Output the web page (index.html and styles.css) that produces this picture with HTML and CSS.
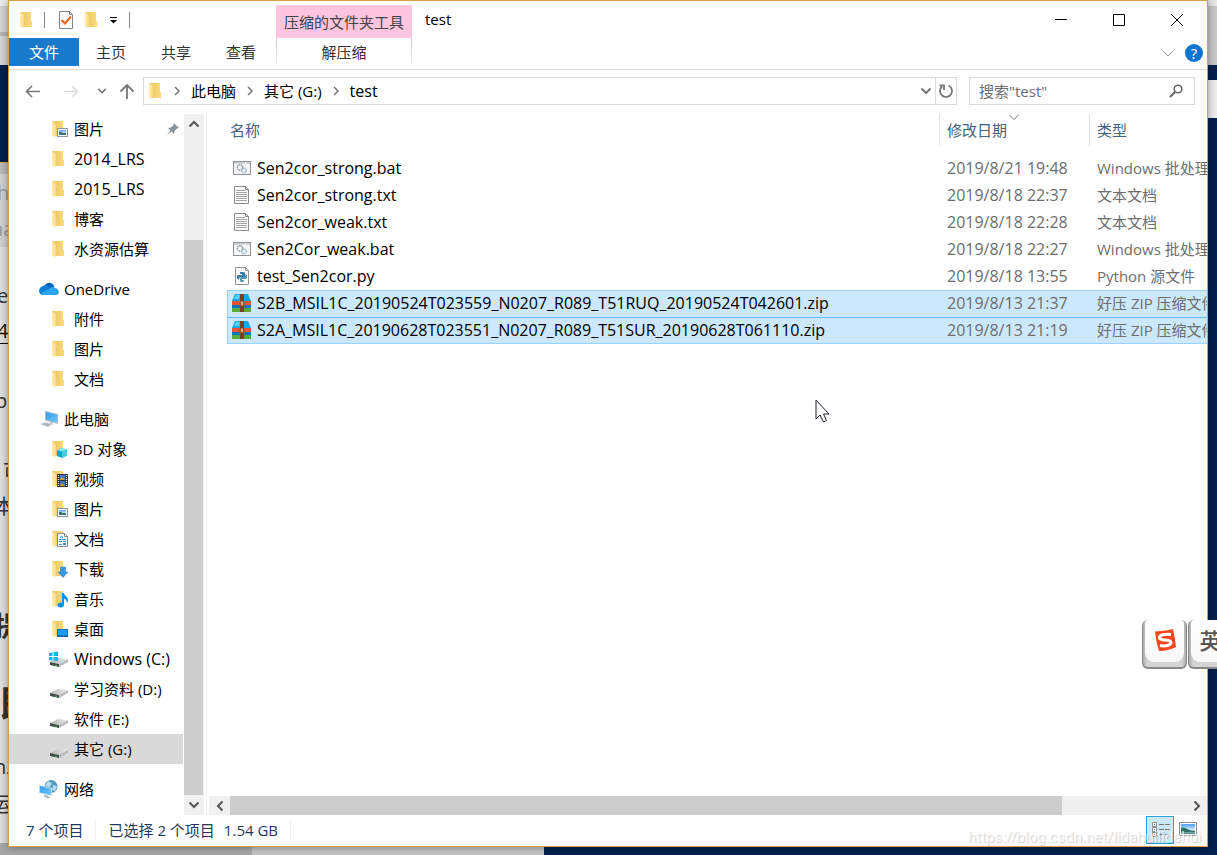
FILE: index.html
```html
<!DOCTYPE html>
<html lang="zh-CN">
<head>
<meta charset="utf-8">
<title>test</title>
<link rel="stylesheet" href="styles.css">
</head>
<body>
<svg class="defs" aria-hidden="true">
  <defs>
    <linearGradient id="gold" x1="0" x2="1"><stop offset="0" stop-color="#e9c35f"/><stop offset="1" stop-color="#fbdb80"/></linearGradient>
    <linearGradient id="screen" x1="0" y1="0" x2="1" y2="1"><stop offset="0" stop-color="#2f9bea"/><stop offset="1" stop-color="#6cc8ff"/></linearGradient>
    <linearGradient id="drivetop" x1="0" x2="1"><stop offset="0" stop-color="#b3b3b3"/><stop offset="1" stop-color="#ededed"/></linearGradient>
    <linearGradient id="pic" x1="0" y1="0" x2="0" y2="1"><stop offset="0" stop-color="#4d9df5"/><stop offset=".6" stop-color="#d4ecff"/><stop offset="1" stop-color="#3a8070"/></linearGradient>
  </defs>
  <symbol id="folder" viewBox="0 0 18 18"><path d="M1 1H12V10H13V16H4.500L1 14Z" fill="url(#gold)"/><path d="M1 1L4.500 3.500V17.500L1 15.500Z" fill="#ffe7a0"/></symbol>
  <symbol id="pictures" viewBox="0 0 18 18"><use href="#folder"/><rect x="6.500" y="8.500" width="10" height="8" fill="#fff" stroke="#8c96a3"/><rect x="8" y="10" width="7" height="5" fill="url(#pic)"/><path d="M8 12l2 0 2 1h3v2H8z" fill="#35766c"/></symbol>
  <symbol id="objects" viewBox="0 0 18 18"><use href="#folder"/><path d="M6 10l5-2 5 1.500v6L11 18l-5-2z" fill="#16a3c6"/><path d="M6 10l5-2 5 1.500-5 2z" fill="#8eebf5"/><path d="M11 11.500l5-2v6L11 18z" fill="#48c9df"/></symbol>
  <symbol id="video" viewBox="0 0 18 18"><use href="#folder"/><path d="M6 4h11v13H6z" fill="#303030"/><path d="M9 5h5v5H9z" fill="#3579db"/><path d="M9 11h5v5H9z" fill="#3673d7"/><path d="M9 9l2-2 3 3H9M9 15l2-2 3 3H9" fill="#d29a38"/><path d="M7.500 5v12M15.500 5v12" stroke="#fff" stroke-width="1.300" stroke-dasharray="1 1"/></symbol>
  <symbol id="documents" viewBox="0 0 18 18"><use href="#folder"/><path d="M6.500 3.500h7l3 3v10h-10z" fill="#fff" stroke="#858b92"/><path d="M13.500 3.500v3h3" fill="none" stroke="#858b92"/><path d="M9 8l1.500-2L12 8M8 9.500h7M8 11.500h3M12 11.500h3M8 14.500h3" stroke="#249bd6" fill="none"/><path d="M12 13h3v2h-3z" fill="#5189a5"/></symbol>
  <symbol id="downloads" viewBox="0 0 18 18"><use href="#folder"/><path d="M9.500 7h5v5H17l-5 5.500L7 12h2.500z" fill="#3c96e8" stroke="#2f80cd" stroke-width=".5"/></symbol>
  <symbol id="music" viewBox="0 0 18 18"><use href="#folder"/><path d="M11 3h2c0 3 4 3 4 7 0 2-1 3-1.500 3 .7-2-.5-4-2.500-4v6c0 1.500-1.500 2.500-3.500 2.500S6.500 16.500 6.500 15 8.500 12 11 12.500z" fill="#0794ee"/></symbol>
  <symbol id="desktop" viewBox="0 0 18 18"><use href="#folder"/><rect x="6.500" y="9.500" width="10" height="7" fill="#1b9df6" stroke="#0973c7"/><path d="M7 16h10" stroke="#123b62" stroke-dasharray="2 1"/></symbol>
  <symbol id="drive" viewBox="1 -1 18 18"><path d="M0 12l8-4 10 1-8 5z" fill="url(#drivetop)"/><path d="M0 12l9 2v3l-9-2z" fill="#454b47"/><path d="M9 14l9-5v3l-9 5z" fill="#bcbcbc"/><path d="M5 14.500l2 .5v1l-2-.5z" fill="#4bbf55"/></symbol>
  <symbol id="windrive" viewBox="0 0 18 18"><use href="#drive" y="-1"/><path d="M-2 3l3.500-.5V6H-2zM2.500 2.300L7 1.500V6H2.500zM-2 7h3.500v3.500L-2 10zM2.500 7H7v4l-4.500-.5z" fill="#05b7ef"/></symbol>
  <symbol id="onedrive" viewBox="0 0 20 18"><path d="M5 7C7 1 14 2 15.500 7l-4 5z" fill="#0867ba"/><path d="M4 6c3-1 5 0 6.500 2l4 5.500L3 15C-1 14-1 7 4 6z" fill="#0d7fd6"/><path d="M10 9c2-3 5-2 6-1 5 1 5 7 1 7H3C1 14 3 12 4 12z" fill="#29a6ec"/></symbol>
  <symbol id="pc" viewBox="0 0 20 18"><path d="M6 1l13 3v10L6 10.500z" fill="#a9b9c5"/><path d="M7 2l11 2.700V12.500L7 9.500z" fill="url(#screen)"/><path d="M11 11.500l3 1v2l-3-1zM1 14l5-2 8 2-5 3z" fill="#c6ccd3"/><path d="M3 14.500l7 1.500M5 13.500l6 1.500" stroke="#98a0aa" stroke-width=".6"/></symbol>
  <symbol id="network" viewBox="0 0 20 18"><circle cx="12" cy="6.500" r="6.500" fill="#4b9aba"/><path d="M9 1l4 2-2 4-5-1zM14 5l4 1-2 5-3-1z" fill="#b7dded"/><path d="M0 5l13 3v8L0 13z" fill="#c7dbe7"/><path d="M1 6l11 3V15L1 12.500z" fill="url(#screen)"/><path d="M5 14.500l4 1v1l3 1-3 1-4-2z" fill="#acb8c2"/></symbol>
  <symbol id="bat" viewBox="0 0 20 18"><rect x="1.500" y="2.500" width="17" height="13" fill="#f5f5f5" stroke="#8e9297"/><path d="M2 4h11M14 4h4" stroke="#a8adb3" stroke-dasharray="11 1 1 1 1 1"/><circle cx="8" cy="8.500" r="2.700" fill="none" stroke="#90989e" stroke-width="1.500" stroke-dasharray="1.300 .6"/><circle cx="12" cy="11.500" r="2.300" fill="none" stroke="#95b9d3" stroke-width="1.500" stroke-dasharray="1.200 .5"/></symbol>
  <symbol id="txt" viewBox="0 0 20 18"><path d="M2.500.5h11l3 3v14h-14z" fill="#fff" stroke="#8b8b8b"/><path d="M13.500.5v3h3" fill="none" stroke="#8b8b8b"/><path d="M4 4.500h9M4 6.500h11M4 8.500h11M4 10.500h11M4 12.500h11M4 14.500h11" stroke="#a2a2a2"/></symbol>
  <symbol id="py" viewBox="0 0 20 18"><path d="M3.500.5h10l3 3v14h-13z" fill="#fafafa" stroke="#969696"/><path d="M13.500.5v3h3" fill="none" stroke="#969696"/><path d="M8 5h4l1 1v4H8.500L7 11.500V13L5 11.500v-3L6.500 8H10V7H8z" fill="#397eaa"/><path d="M13 7l2 1v3l-1 1h-4v1h2v1l-1 1H9l-1-1v-3l1-1h4z" fill="#5599b7"/></symbol>
  <symbol id="zip" viewBox="0 0 20 18"><path d="M3 0h13l3 7H0z" fill="#14a9e7"/><path d="M4 1h4L7 5H2z" fill="#5ad0f4"/><path d="M0 7h19v4H0z" fill="#ec5335"/><path d="M0 11h19v3H0z" fill="#0875bd"/><path d="M0 14h19v4H0z" fill="#57ac3b"/><path d="M8 0h4v18H8z" fill="#764421"/><path d="M7 8h6v4H7z" fill="#a35d2c"/><path d="M9.500 7h1v4h-1z" fill="#f9eedb"/></symbol>
  <symbol id="right" viewBox="0 0 10 10"><path d="M3 1l4 4-4 4" fill="none" stroke="currentColor" stroke-width="1.500"/></symbol>
  <symbol id="down" viewBox="0 0 12 12"><path d="M1.500 3.500L6 8l4.500-4.500" fill="none" stroke="currentColor" stroke-width="2"/></symbol>
  <symbol id="thin" viewBox="0 0 12 12"><path d="M.5 3.500L6 9l5.500-5.500" fill="none" stroke="currentColor"/></symbol>
</svg>

<div class="backdrop" aria-hidden="true">
  <div class="page-behind">
    <span class="frag f1">h</span><span class="frag f2">na</span><span class="frag f3">e</span><span class="frag f4">4</span><span class="frag f5">p</span><span class="frag f6">可</span><span class="frag f7">本</span><span class="frag f8">提</span><span class="frag f9">即</span><span class="frag f10">n2</span><span class="frag f11">运</span>
  </div>
  <div class="side-behind"></div>
  <div class="foot-behind"></div>
</div>

<main class="window">
  <header class="titlebar">
    <div class="quick">
      <svg class="q-folder" viewBox="1 0 12 18"><use href="#folder" width="18" height="18"/></svg>
      <i class="sep"></i>
      <button class="q-check" aria-label="属性"><svg viewBox="0 0 14 18"><path d="M.5.5h10l3 3v14H.5z" fill="#fafafa" stroke="#858585"/><path d="M10.500.5v3h3" fill="none" stroke="#858585"/><path d="M2.500 9L6 12.500l6-7" fill="none" stroke="#f06423" stroke-width="2.200"/></svg></button>
      <button aria-label="新建文件夹"><svg class="q-folder" viewBox="1 0 12 18"><use href="#folder" width="18" height="18"/></svg></button>
      <button aria-label="自定义快速访问工具栏"><svg class="q-more" viewBox="0 0 8 8"><path d="M1 1.500h7" stroke="#000"/><path d="M1 4h7L4.500 7.500z"/></svg></button>
      <i class="sep"></i>
    </div>
    <div class="context-title">压缩的文件夹工具</div>
    <h1>test</h1>
    <div class="controls">
      <button aria-label="最小化"><svg viewBox="0 0 14 14"><path d="M1 6.500h12" stroke="#000"/></svg></button>
      <button aria-label="最大化"><svg viewBox="0 0 14 14"><path d="M1.500 1.500h11v11h-11z" fill="none" stroke="#000"/></svg></button>
      <button aria-label="关闭"><svg viewBox="0 0 14 14"><path d="M1 1l12 12M13 1L1 13" stroke="#000"/></svg></button>
    </div>
  </header>

  <nav class="ribbon">
    <button class="file">文件</button><button class="tab">主页</button><button class="tab">共享</button><button class="tab">查看</button><button class="context-tab">解压缩</button>
    <div class="ribbon-end">
      <button aria-label="展开功能区"><svg class="expand" viewBox="0 0 12 12"><use href="#thin"/></svg></button>
      <button class="help" aria-label="帮助">?</button>
    </div>
  </nav>

  <div class="navrow">
    <button class="back" aria-label="后退"><svg viewBox="0 0 16 16"><path d="M15 8.500H1.500M7 3L1.500 8.500 7 14" fill="none" stroke="#777" stroke-width="1.600"/></svg></button>
    <button class="forward" aria-label="前进"><svg viewBox="0 0 16 16"><path d="M1 8.500h13.500M9 3L14.500 8.500 9 14" fill="none" stroke="#dcdcdc" stroke-width="1.600"/></svg></button>
    <button class="recent" aria-label="最近位置"><svg viewBox="0 0 12 12"><use href="#down"/></svg></button>
    <button class="up" aria-label="上移"><svg viewBox="0 0 16 16"><path d="M8 16V2M1.500 8.500L8 2l6.500 6.500" fill="none" stroke="#777" stroke-width="1.800"/></svg></button>
    <div class="address">
      <svg class="a-folder" viewBox="1 0 12 18"><use href="#folder" width="18" height="18"/></svg>
      <svg class="crumb"><use href="#right"/></svg><a href="#">此电脑</a>
      <svg class="crumb"><use href="#right"/></svg><a href="#">其它 (G:)</a>
      <svg class="crumb"><use href="#right"/></svg><a class="latin" href="#">test</a>
      <button class="drop" aria-label="以前的位置"><svg viewBox="0 0 12 12"><use href="#down"/></svg></button>
      <button class="refresh" aria-label="刷新"><svg viewBox="0 0 16 16"><path d="M10.500 2.500A6 6 0 1 1 4 3.500M1.500 2.500h4.500V7" fill="none" stroke="#777" stroke-width="1.800"/></svg></button>
    </div>
    <div class="search">
      <input type="text" aria-label="搜索" placeholder="搜索&quot;test&quot;">
      <svg viewBox="0 0 14 14"><circle cx="9" cy="5" r="3.800" fill="none" stroke="#666" stroke-width="1.600"/><path d="M6.300 7.700L1 13" stroke="#666" stroke-width="2"/></svg>
    </div>
  </div>

  <div class="body">
    <nav class="tree">
      <ul>
        <li><svg><use href="#pictures"/></svg>图片<svg class="pin" viewBox="0 0 14 14"><path d="M8 1l5 5-2 .5-2.500 2.500-.5 3-2.500-2.500L1 13l3.500-4.500L2 6l3-.5L7.500 3z" fill="#8795a1"/></svg></li>
        <li class="latin"><svg><use href="#folder"/></svg>2014_LRS</li>
        <li class="latin"><svg><use href="#folder"/></svg>2015_LRS</li>
        <li><svg><use href="#folder"/></svg>博客</li>
        <li><svg><use href="#folder"/></svg>水资源估算</li>
      </ul>
      <ul>
        <li class="root"><svg><use href="#onedrive"/></svg>OneDrive</li>
        <li><svg><use href="#folder"/></svg>附件</li>
        <li><svg><use href="#folder"/></svg>图片</li>
        <li><svg><use href="#folder"/></svg>文档</li>
      </ul>
      <ul>
        <li class="root"><svg><use href="#pc"/></svg>此电脑</li>
        <li><svg><use href="#objects"/></svg>3D 对象</li>
        <li><svg><use href="#video"/></svg>视频</li>
        <li><svg><use href="#pictures"/></svg>图片</li>
        <li><svg><use href="#documents"/></svg>文档</li>
        <li><svg><use href="#downloads"/></svg>下载</li>
        <li><svg><use href="#music"/></svg>音乐</li>
        <li><svg><use href="#desktop"/></svg>桌面</li>
        <li class="latin"><svg><use href="#windrive"/></svg>Windows (C:)</li>
        <li><svg><use href="#drive"/></svg>学习资料 (D:)</li>
        <li><svg><use href="#drive"/></svg>软件 (E:)</li>
        <li class="current"><svg><use href="#drive"/></svg>其它 (G:)</li>
      </ul>
      <ul>
        <li class="root"><svg><use href="#network"/></svg>网络</li>
      </ul>
    </nav>
    <div class="vscroll">
      <button aria-label="向上滚动"><svg class="turn-up" viewBox="0 0 12 12"><use href="#down"/></svg></button>
      <div class="vtrack"><div class="vthumb"></div></div>
      <button aria-label="向下滚动"><svg viewBox="0 0 12 12"><use href="#down"/></svg></button>
    </div>
    <section class="content">
      <div class="files">
        <table>
          <thead><tr><th class="name">名称</th><th class="date">修改日期<svg class="sort" viewBox="0 0 12 12"><use href="#thin"/></svg></th><th class="type">类型</th></tr></thead>
          <tbody>
            <tr><td><svg><use href="#bat"/></svg>Sen2cor_strong.bat</td><td class="latin">2019/8/21 19:48</td><td>Windows 批处理文件</td></tr>
            <tr><td><svg><use href="#txt"/></svg>Sen2cor_strong.txt</td><td class="latin">2019/8/18 22:37</td><td>文本文档</td></tr>
            <tr><td><svg><use href="#txt"/></svg>Sen2cor_weak.txt</td><td class="latin">2019/8/18 22:28</td><td>文本文档</td></tr>
            <tr><td><svg><use href="#bat"/></svg>Sen2Cor_weak.bat</td><td class="latin">2019/8/18 22:27</td><td>Windows 批处理文件</td></tr>
            <tr><td><svg><use href="#py"/></svg>test_Sen2cor.py</td><td class="latin">2019/8/18 13:55</td><td>Python 源文件</td></tr>
            <tr class="selected"><td><svg><use href="#zip"/></svg>S2B_MSIL1C_20190524T023559_N0207_R089_T51RUQ_20190524T042601.zip</td><td class="latin">2019/8/13 21:37</td><td>好压 ZIP 压缩文件</td></tr>
            <tr class="selected"><td><svg><use href="#zip"/></svg>S2A_MSIL1C_20190628T023551_N0207_R089_T51SUR_20190628T061110.zip</td><td class="latin">2019/8/13 21:19</td><td>好压 ZIP 压缩文件</td></tr>
          </tbody>
        </table>
      </div>
      <div class="hscroll">
        <button aria-label="向左滚动"><svg class="turn-left" viewBox="0 0 12 12"><use href="#down"/></svg></button>
        <div class="htrack"><div class="hthumb"></div></div>
        <button aria-label="向右滚动"><svg class="turn-right" viewBox="0 0 12 12"><use href="#down"/></svg></button>
      </div>
    </section>
  </div>

  <footer class="status">
    <span class="count">7 个项目</span>
    <span class="picked">已选择 2 个项目</span>
    <span class="size">1.54 GB</span>
    <div class="views">
      <button class="view on" aria-label="详细信息"><svg viewBox="0 0 20 18"><path d="M2.500 1.500h4v4h-4zM2.500 6.500h4v4h-4zM2.500 11.500h4v4h-4z" fill="#fff" stroke="#8c8c8c"/><path d="M4 3h1v1H4z" fill="#31798b"/><path d="M4 8h1v1H4z" fill="#3f6bd3"/><path d="M4 13h1v1H4z" fill="#c33"/><path d="M9 3.500h5M15 3.500h5M9 8.500h5M15 8.500h5M9 13.500h5M15 13.500h5" stroke="#777"/></svg></button>
      <button class="view" aria-label="大图标"><svg viewBox="0 0 20 18"><path d="M1.500 1.500h17v13h-17z" fill="#fff" stroke="#8c8c8c"/><path d="M3 3h14v10H3z" fill="url(#pic)"/><path d="M3 7c4-2 6 3 14 3v1H3z" fill="#326f66"/></svg></button>
    </div>
  </footer>
</main>

<svg class="cursor" viewBox="0 0 16 24" aria-hidden="true"><path d="M1 1v19l4-4 3.500 7 3-1.500L8.500 15H14z" fill="#fff" stroke="#20202c"/></svg>

<div class="ime">
  <button class="key" aria-label="搜狗输入法"><span><svg viewBox="0 0 24 24"><path d="M2 3.500Q12 3 20 1q2 9 3 18-8 4-17 4Q3 14 2 3.500z" fill="#f5481d"/><path d="M18 6.500C12 5.500 6 7 6.500 10c.5 3.500 11.500.5 11.500 4.500 0 3-6 4-11 3" fill="none" stroke="#fff" stroke-width="3"/></svg></span></button>
  <button class="key"><span>英</span></button>
</div>
<div class="watermark">https://blog.csdn.net/lidahuilidahui</div>
</body>
</html>
```
FILE: styles.css
```css
* { box-sizing: border-box; }
html, body { height: 100%; }
body {
  margin: 0;
  padding: 0 9px 8px 8px;
  position: relative;
  overflow: hidden;
  background: #00204d;
  color: #000;
  font: 15px/20px "Open Sans", "Noto Sans CJK SC", sans-serif;
}
button {
  display: flex;
  align-items: center;
  justify-content: center;
  padding: 0;
  border: 0;
  background: none;
  color: inherit;
  font: inherit;
}
svg { display: block; flex: none; overflow: visible; }
symbol { overflow: visible; }
ul { list-style: none; margin: 0; padding: 0; }
.defs { position: absolute; width: 0; height: 0; }
.latin { font-size: 16px; }

/* desktop behind the window */
.backdrop { position: absolute; inset: 0; overflow: hidden; }
.page-behind {
  position: absolute;
  left: 0;
  top: 0;
  bottom: 0;
  width: 8px;
  overflow: hidden;
  background: linear-gradient(#ececec 6px, #d3d3d3 6px 32px, #b5b5b5 32px 36px, #d3d3d3 36px 65px, #00204d 65px 162px, #d8a050 162px 163px, #b8b8b8 163px 174px, #d0d0d0 174px 247px, #dedede 247px);
}
.frag {
  position: absolute;
  left: -3px;
  color: #333;
  font-size: 20px;
  line-height: 24px;
}
.f1 { top: 181px; color: #999; }
.f2 { top: 217px; left: -9px; color: #999; }
.f3 { top: 284px; }
.f4 { top: 319px; border-bottom: 1px solid #111; color: #111; }
.f5 { top: 389px; left: -5px; }
.f6 { top: 460px; left: 3px; }
.f7 { top: 495px; left: -6px; }
.f8 { top: 612px; left: -6px; font-size: 28px; font-weight: 700; line-height: 28px; }
.f9 { top: 684px; left: 0; font-size: 36px; font-weight: 700; line-height: 40px; }
.f10 { top: 755px; left: -6px; }
.f11 { top: 793px; left: -9px; }
.side-behind {
  position: absolute;
  right: 0;
  top: 0;
  bottom: 0;
  width: 9px;
  background: linear-gradient(#e8e8e8 6px, #c8c8c8 6px 65px, #00204d 65px 80px, #eee 80px 118px, #00204d 118px);
}
.foot-behind {
  position: absolute;
  left: 0;
  bottom: 0;
  width: 544px;
  height: 12px;
  background: linear-gradient(90deg, #a6a6a6 252px, #c4c4c4 252px);
}

/* window */
.window {
  position: relative;
  display: flex;
  flex-direction: column;
  height: 100%;
  border: 1px solid #d99e4b;
  background: #fff;
  box-shadow: 0 0 8px rgba(0, 0, 0, .4);
}
.titlebar { display: flex; height: 37px; flex: none; }
.quick { display: flex; align-items: center; gap: 12px; width: 267px; padding-left: 11px; }
.q-folder, .a-folder { width: 12px; height: 18px; }
.q-check { margin-left: 2px; }
.q-check svg { width: 14px; height: 18px; }
.q-more { width: 8px; height: 8px; }
.sep { width: 1px; height: 16px; background: #888; }
.context-title {
  width: 136px;
  margin-top: 4px;
  background: #ffc5df;
  color: #444;
  line-height: 34px;
  text-align: center;
}
h1 { flex: 1; margin: 0; padding-left: 13px; font-size: 15px; font-weight: 400; line-height: 37px; }
.controls { display: flex; padding-right: 1px; }
.controls button { width: 58px; }
.controls svg { width: 14px; height: 14px; }

.ribbon { display: flex; flex: none; height: 32px; border-bottom: 1px solid #dadada; color: #333; }
.file { width: 70px; height: 28px; background: #1979ca; color: #fff; }
.tab { width: 64px; height: 28px; margin-right: 1px; }
.context-tab {
  width: 136px;
  height: 28px;
  margin-left: 2px;
  border: solid #ddd;
  border-width: 0 1px;
  border-image: linear-gradient(#c8c8c8, #f2f2f2) 1;
  border-image-width: 0 1px;
}
.ribbon-end { display: flex; align-items: center; gap: 11px; height: 30px; margin-left: auto; padding-right: 4px; }
.expand { width: 12px; height: 12px; color: #999; }
.help { width: 18px; height: 18px; border-radius: 50%; background: #0a74d0; color: #fff; line-height: 18px; }

.navrow { display: flex; flex: none; height: 43px; padding: 7px 12px 8px 8px; color: #777; }
.navrow button svg { width: 16px; height: 16px; }
.navrow .back { width: 32px; }
.navrow .forward { width: 44px; }
.navrow .recent { width: 17px; }
.navrow .up { width: 33px; }
.navrow .recent svg { width: 10px; height: 10px; }
.address { display: flex; flex: 1; align-items: center; border: 1px solid #d9d9d9; padding-left: 5px; }
.address a { color: #000; text-decoration: none; }
.crumb { width: 10px; height: 10px; margin: 0 9px 0 9px; }
.a-folder + .crumb { margin-left: 11px; }
.navrow .drop { width: 18px; margin-left: auto; }
.navrow .drop svg { width: 12px; height: 12px; }
.refresh { align-self: stretch; width: 21px; border-left: 1px solid #d9d9d9; }
.search { display: flex; align-items: center; width: 226px; margin-left: 12px; padding: 0 11px 0 9px; border: 1px solid #d9d9d9; }
.search input { flex: 1; min-width: 0; padding: 0; border: 0; outline: 0; background: none; font: inherit; }
.search input::placeholder { color: #6d6d6d; opacity: 1; }
.search svg { width: 14px; height: 14px; }

.body { display: flex; flex: 1; min-height: 0; }
.tree { width: 174px; overflow: hidden; padding-top: 1px; }
.tree ul + ul { margin-top: 10px; }
.tree li { display: flex; align-items: center; gap: 5px; height: 30px; padding-left: 42px; }
.tree li svg { width: 18px; height: 18px; }
.tree .root { padding-left: 30px; }
.tree .root svg { width: 20px; }
.tree .current { background: #d9d9d9; }
.tree li .pin { width: 14px; height: 14px; margin: 0 3px 0 auto; }
.vscroll { display: flex; flex-direction: column; width: 20px; margin: 1px 2px 0 1px; background: #f0f0f0; color: #555; }
.vscroll button { height: 20px; }
.vscroll svg, .hscroll svg { width: 12px; height: 12px; }
.turn-up { transform: rotate(180deg); }
.turn-left { transform: rotate(90deg); }
.turn-right { transform: rotate(-90deg); }
.vtrack { display: flex; flex: 1; flex-direction: column; justify-content: flex-end; }
.vthumb { width: 19px; height: 84%; background: #cdcdcd; }
.content { display: flex; flex: 1; flex-direction: column; min-width: 0; border-left: 1px solid #eee; }
.files { flex: 1; overflow: hidden; padding-left: 20px; }
table { width: 100%; border-collapse: separate; border-spacing: 0; table-layout: fixed; }
th { position: relative; height: 35px; padding: 0 0 2px 7px; color: #44607e; font-weight: 400; text-align: left; }
th.name { padding-left: 3px; }
th.date { width: 150px; }
th.type { width: 117px; }
th + th::before { content: ""; position: absolute; left: -1px; top: 1px; bottom: 2px; width: 1px; background: #e2e2e2; }
.sort { position: absolute; left: 69px; top: -1px; width: 10px; height: 10px; color: #555; }
tbody::before { content: ""; display: block; height: 7px; }
td { height: 27px; padding: 0 0 2px 7px; overflow: hidden; color: #6d6d6d; white-space: nowrap; }
td:first-child { padding-left: 5px; color: #000; font-size: 16px; }
td svg { display: inline-block; width: 20px; height: 18px; margin-right: 5px; vertical-align: -3px; }
.selected td { background: #cce8ff; border-top: 1px solid #99d1ff; }
.selected td:first-child { border-left: 1px solid #99d1ff; padding-left: 4px; }
.selected:last-child td { border-top-color: #66b8f5; border-bottom: 1px solid #99d1ff; padding-bottom: 1px; }
.hscroll { display: flex; height: 19px; margin-left: 2px; background: #f0f0f0; color: #555; }
.hscroll button { width: 21px; }
.htrack { flex: 1; }
.hthumb { width: 87%; height: 19px; background: #cdcdcd; }

.status { display: flex; flex: none; align-items: center; height: 31px; padding: 0 0 2px 17px; color: #1e395b; }
.count { padding-right: 12px; border-right: 1px solid #eee; }
.picked { padding-left: 12px; }
.size { margin-left: 9px; padding-right: 12px; border-right: 1px solid #eee; }
.views { display: flex; align-self: stretch; margin-left: auto; padding: 1px 5px 0 0; }
.view { width: 28px; border: 1px solid transparent; }
.view.on { border-color: #26a0da; background: #cbe8f6; }
.view svg { width: 20px; height: 18px; }

/* overlays */
.cursor { position: absolute; left: 815px; top: 399px; width: 16px; height: 24px; }
.ime { position: absolute; left: 1142px; top: 620px; display: flex; gap: 1px; }
.key {
  flex: none;
  align-items: flex-start;
  width: 45px;
  height: 49px;
  border: solid #888;
  border-width: 0 1px 2px;
  border-radius: 6px;
  background: linear-gradient(90deg, #aaa, #d4d4d4 4px 39px, #aaa);
}
.key span {
  display: flex;
  align-items: center;
  justify-content: center;
  width: 39px;
  height: 42px;
  padding-bottom: 2px;
  border-radius: 4px 4px 9px 9px;
  background: linear-gradient(#fff, #f7f7f7);
  color: #555;
  font-size: 22px;
  font-weight: 500;
}
.key svg { width: 24px; height: 24px; }
.watermark {
  position: absolute;
  left: 968px;
  bottom: 8px;
  color: rgba(255, 255, 255, .8);
  font: 15px/20px Roboto, sans-serif;
  text-shadow: 1px 1px 1px rgba(0, 0, 0, .2);
  white-space: nowrap;
}
```
